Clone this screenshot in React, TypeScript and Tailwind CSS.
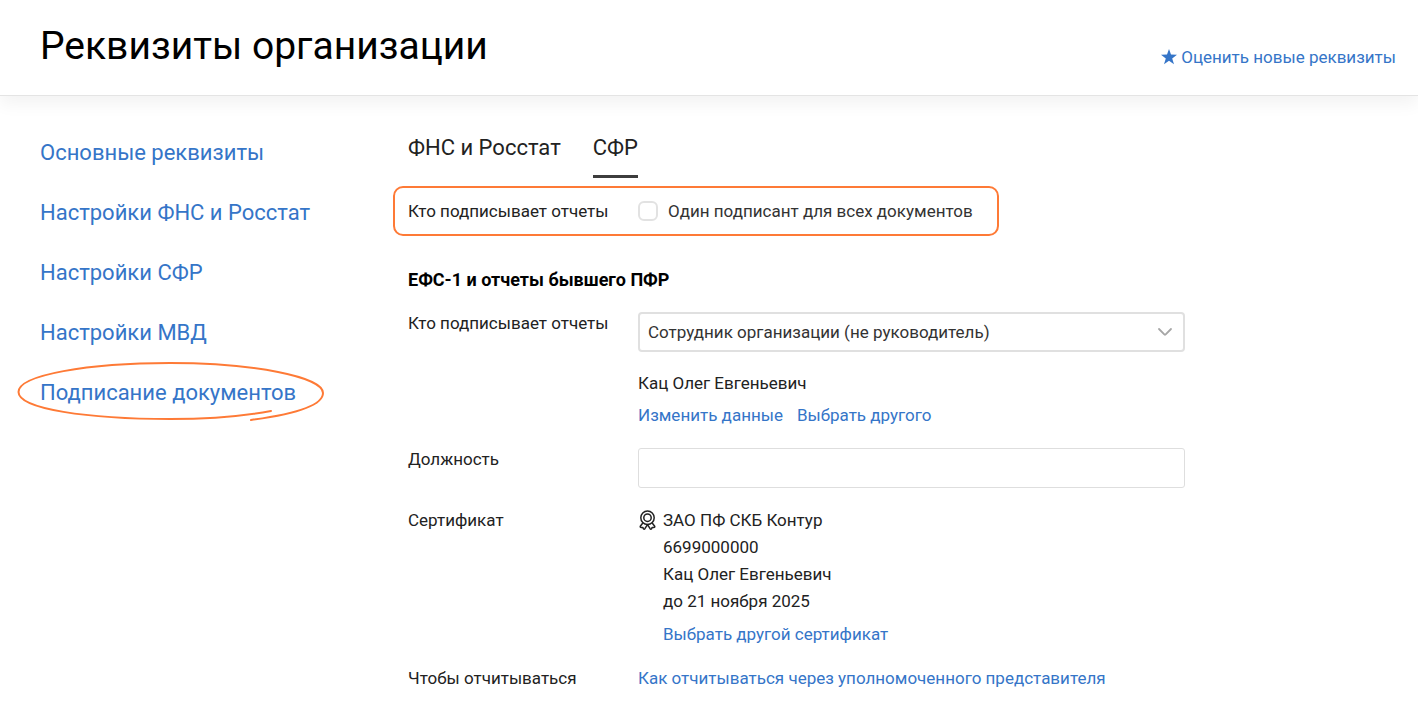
import type { ReactNode } from "react";
import clsx from "clsx";

const navItems = [
  { id: "main", title: "Основные реквизиты" },
  { id: "fns", title: "Настройки ФНС и Росстат" },
  { id: "sfr", title: "Настройки СФР" },
  { id: "mvd", title: "Настройки МВД" },
  { id: "signing", title: "Подписание документов", marked: true },
];

const tabs = [
  { id: "fns", title: "ФНС и Росстат" },
  { id: "sfr", title: "СФР" },
];

const certificate = [
  "ЗАО ПФ СКБ Контур",
  "6699000000",
  "Кац Олег Евгеньевич",
  "до 21 ноября 2025",
];

export default function App() {
  return (
    <div className="min-h-screen bg-white font-[Roboto,'Noto_Sans',sans-serif] text-[17px] leading-7 text-[#222]">
      <header className="flex h-24 items-center justify-between border-b border-[#e4e4e4] pl-10 pr-[22px] shadow-[0_8px_16px_rgba(0,0,0,0.05)]">
        <h1 className="pb-1 text-[39px] leading-12 text-black">
          Реквизиты организации
        </h1>
        <TextLink className="mt-[18px] flex items-center gap-1">
          <StarIcon />
          Оценить новые реквизиты
        </TextLink>
      </header>

      <div className="flex">
        <nav className="w-98 shrink-0 pl-10 pt-[41px]">
          <ul className="space-y-7 text-[22px] leading-8">
            {navItems.map((item) => (
              <li key={item.id}>
                <TextLink className="relative inline-block">
                  {item.title}
                  {item.marked && <PenCircle />}
                </TextLink>
              </li>
            ))}
          </ul>
        </nav>

        <main className="min-w-0 flex-1 pb-7 pt-8">
          <div role="tablist" className="flex gap-8 pl-4">
            {tabs.map((tab) => (
              <button
                key={tab.id}
                type="button"
                role="tab"
                aria-selected={tab.id === "sfr"}
                className={clsx(
                  "h-[50px] border-b-3 pb-2 text-[22px]",
                  tab.id === "sfr" ? "border-[#3d3d3d]" : "border-transparent"
                )}
              >
                {tab.title}
              </button>
            ))}
          </div>

          <div className="ml-px mt-2 flex h-[50px] w-[606px] items-center rounded-[10px] border-2 border-[#fe7a36] pl-[13px]">
            <p className="w-[230px] shrink-0">Кто подписывает отчеты</p>
            <label className="flex items-center gap-2.5 text-[#333]">
              <input
                type="checkbox"
                className="size-5 appearance-none rounded-md border-2 border-[#e2e2e2] bg-white"
              />
              Один подписант для всех документов
            </label>
          </div>

          <div className="pl-4 pr-10">
            <h2 className="mt-[30px] text-lg leading-7 font-bold text-black">
              ЕФС-1 и отчеты бывшего ПФР
            </h2>

            <Row label="Кто подписывает отчеты" htmlFor="signer" className="mt-[15px]">
              <div className="relative mt-[3px]">
                <select
                  id="signer"
                  className="h-10 w-full appearance-none rounded-[4px] border-2 border-[#e0e0e0] bg-white pl-2 pr-10 text-[#333]"
                >
                  <option>Сотрудник организации (не руководитель)</option>
                </select>
                <ChevronIcon />
              </div>
              <p className="mt-[17px]">Кац Олег Евгеньевич</p>
              <div className="mt-1 flex gap-3.5">
                <TextLink>Изменить данные</TextLink>
                <TextLink>Выбрать другого</TextLink>
              </div>
            </Row>

            <Row label="Должность" htmlFor="position" className="mt-4">
              <input
                id="position"
                type="text"
                className="mt-[3px] block h-10 w-full rounded-[3px] border border-[#dedede] px-2"
              />
            </Row>

            <Row label="Сертификат" className="mt-[18px]">
              <div className="flex gap-1.5">
                <MedalIcon />
                <div className="pt-px">
                  {certificate.map((line) => (
                    <p key={line} className="leading-[27px]">
                      {line}
                    </p>
                  ))}
                  <TextLink className="mt-[5px] block">
                    Выбрать другой сертификат
                  </TextLink>
                </div>
              </div>
            </Row>

            <Row label="Чтобы отчитываться" className="mt-4">
              <TextLink>Как отчитываться через уполномоченного представителя</TextLink>
            </Row>
          </div>
        </main>
      </div>
    </div>
  );
}

function Row({
  label,
  htmlFor,
  className,
  children,
}: {
  label: string;
  htmlFor?: string;
  className?: string;
  children: ReactNode;
}) {
  return (
    <div className={clsx("flex", className)}>
      {htmlFor ? (
        <label htmlFor={htmlFor} className="w-[230px] shrink-0">
          {label}
        </label>
      ) : (
        <p className="w-[230px] shrink-0">{label}</p>
      )}
      <div className="min-w-0 max-w-[547px] flex-1">{children}</div>
    </div>
  );
}

function TextLink({
  className,
  children,
}: {
  className?: string;
  children: ReactNode;
}) {
  return (
    <a href="#" className={clsx("text-[#3575c8] hover:underline", className)}>
      {children}
    </a>
  );
}

function StarIcon() {
  return (
    <svg className="size-4" viewBox="0 0 16 16" fill="currentColor" aria-hidden="true">
      <path d="M8 0l2 5.6 6 .2-4.8 3.6L13 15.2 8 11.8 3 15.2l1.8-5.8L0 5.8l6-.2z" />
    </svg>
  );
}

function ChevronIcon() {
  return (
    <svg
      className="pointer-events-none absolute right-3 top-3 size-4"
      viewBox="0 0 16 16"
      fill="none"
      stroke="#a6a6a6"
      strokeWidth="1.8"
      strokeLinecap="round"
      strokeLinejoin="round"
      aria-hidden="true"
    >
      <path d="M2 5l5.3 5.4q.7.6 1.4 0L14 5" />
    </svg>
  );
}

function MedalIcon() {
  return (
    <svg
      className="mt-1 h-5 w-[19px] shrink-0"
      viewBox="0 0 19 20"
      fill="none"
      stroke="currentColor"
      strokeWidth="1.5"
      strokeLinejoin="round"
      aria-hidden="true"
    >
      <circle cx="9.5" cy="7.7" r="6.7" />
      <circle cx="9.5" cy="7.7" r="3.7" />
      <path d="M5 12.8L2.3 16.2q-.4 1.2.9 1.2h1.6l.6 1.3q.8.9 1.5 0L9.5 14.6l2.6 4.1q.7.9 1.5 0l.6-1.3h1.6q1.3 0 .9-1.2L14 12.8" />
    </svg>
  );
}

// hand-drawn loop around the current section
function PenCircle() {
  return (
    <svg
      className="pointer-events-none absolute -left-6 -top-4 h-16 w-[312px] max-w-none"
      viewBox="0 0 312 64"
      fill="none"
      stroke="#fe7a36"
      strokeWidth="2"
      strokeLinecap="round"
      aria-hidden="true"
    >
      <path d="M255 50C228 55 190 58 154 58C72 58 2.5 48 2.5 31C2.5 14 72 2 154 2C238 2 307 16 307 32C307 44 280 53 235 59" />
    </svg>
  );
}
